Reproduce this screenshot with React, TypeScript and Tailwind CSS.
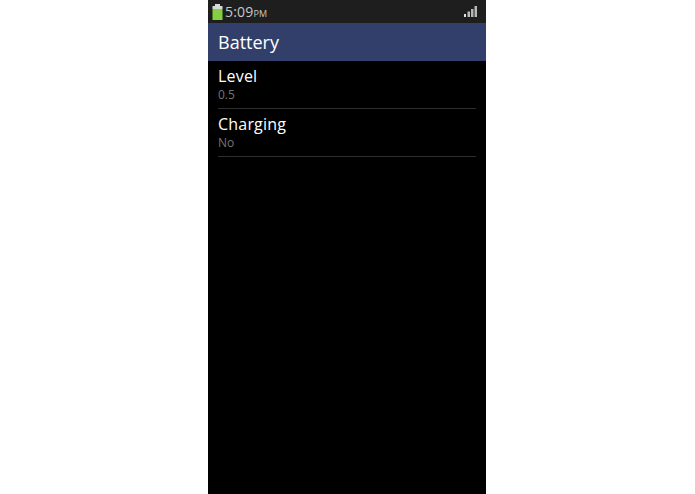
import React from "react";

const rows = [
  { title: "Level", value: "0.5" },
  { title: "Charging", value: "No" },
];

const BatteryIcon = () => (
  <svg width="11" height="16" viewBox="0 0 11 16">
    <rect x="3" y="0" width="5" height="2" fill="#d8d8d8" />
    <rect x="0.5" y="2" width="10" height="3" fill="#d8d8d8" />
    <rect x="0.5" y="5" width="10" height="11" fill="#84d040" />
  </svg>
);

const SignalIcon = () => (
  <svg width="13" height="11" viewBox="0 0 13 11">
    <rect x="0" y="8" width="2" height="3" fill="#e0e0e0" />
    <rect x="3.5" y="5.5" width="2.5" height="5.5" fill="#b8b8b8" />
    <rect x="7" y="3" width="2.5" height="8" fill="#b8b8b8" />
    <rect x="10.5" y="0" width="2.5" height="11" fill="#b8b8b8" />
  </svg>
);

export default function App() {
  return (
    <div className="h-[494px] w-[695px] bg-white pl-[208px] font-['Open_Sans','Liberation_Sans',sans-serif]">
      <div className="flex h-full w-[278px] flex-col bg-black">
        <div className="flex h-[23px] items-center justify-between bg-[#1e1e1e] pl-1 pr-[9px]">
          <div className="flex items-center gap-[2px]">
            <BatteryIcon />
            <span className="text-[14px] leading-none tracking-[0.2px] text-[#c8c8c8]">
              5:09<span className="text-[9px] tracking-normal">PM</span>
            </span>
          </div>
          <SignalIcon />
        </div>
        <div className="flex h-[38px] items-center bg-[#323f6b] px-[10px] text-[18px] text-white">
          Battery
        </div>
        <div className="px-[10px]">
          {rows.map((row) => (
            <div key={row.title} className="h-[48px] border-b border-[#2e2e2e] pt-[4px]">
              <div className="text-[16px] leading-[22px] tracking-[0.2px] text-white">{row.title}</div>
              <div className="text-[12px] leading-[16px] text-[#757575]">{row.value}</div>
            </div>
          ))}
        </div>
      </div>
    </div>
  );
}
